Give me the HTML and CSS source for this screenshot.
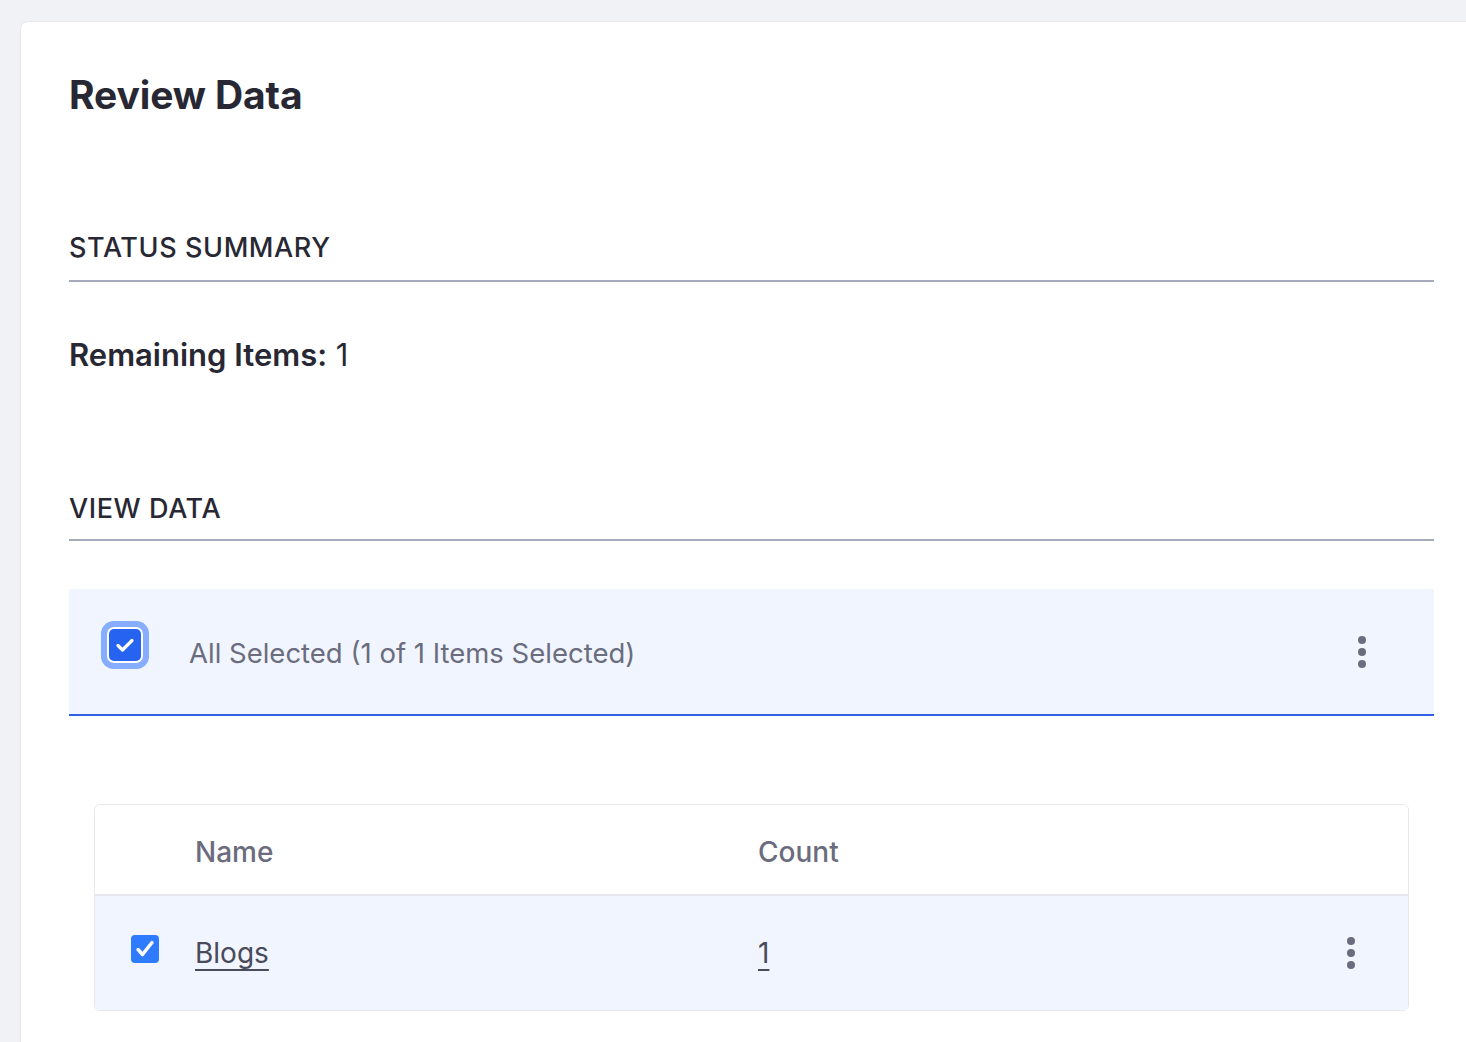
FILE: index.html
```html
<!DOCTYPE html>
<html>
<head>
<meta charset="utf-8">
<link rel="stylesheet" href="styles.css">
</head>
<body>
<div class="sheet">
  <div class="content">
    <h1 class="title">Review Data</h1>

    <h2 class="section-title">STATUS SUMMARY</h2>
    <p class="remaining"><strong>Remaining Items:</strong> 1</p>

    <h2 class="section-title view">VIEW DATA</h2>

    <div class="mbar">
      <span class="mbar-check">
        <svg viewBox="0 0 32 32" width="32" height="32"><path d="M9 16.5l4.5 4.5L23 11.5" fill="none" stroke="#fff" stroke-width="3.2" stroke-linecap="round" stroke-linejoin="round"/></svg>
      </span>
      <span class="mbar-text">All Selected (1 of 1 Items Selected)</span>
      <span class="kebab"><i></i><i></i><i></i></span>
    </div>

    <div class="table-card">
      <div class="trow thead">
        <div class="c-check"></div>
        <div class="c-name">Name</div>
        <div class="c-count">Count</div>
        <div class="c-act"></div>
      </div>
      <div class="trow tbody">
        <div class="c-check">
          <span class="row-check">
            <svg viewBox="0 0 28 28" width="28" height="28"><path d="M7 14.5l4.5 5L21 7.5" fill="none" stroke="#fff" stroke-width="3.4" stroke-linecap="round" stroke-linejoin="round"/></svg>
          </span>
        </div>
        <div class="c-name"><a class="link">Blogs</a></div>
        <div class="c-count"><a class="link">1</a></div>
        <div class="c-act"><span class="kebab"><i></i><i></i><i></i></span></div>
      </div>
    </div>
  </div>
</div>
</body>
</html>
```

FILE: styles.css
```css
html, body {
  margin: 0;
  padding: 0;
}
body {
  background: #f1f2f5;
  font-family: Inter, "Noto Sans", "Liberation Sans", sans-serif;
  color: #272833;
  overflow: hidden;
}
.sheet {
  margin: 21px 0 0 20px;
  width: 1500px;
  height: 1100px;
  background: #fff;
  border: 1px solid #e7e7ed;
  border-radius: 8px 0 0 0;
  box-sizing: border-box;
  padding: 0 0 0 48px;
}
.content {
  width: 1365px;
}
.title {
  margin: 0;
  padding-top: 49px;
  font-size: 39px;
  font-weight: 700;
  line-height: 48px;
  color: #272833;
  letter-spacing: -0.1px;
}
.section-title {
  margin: 108px 0 0;
  font-size: 27px;
  font-weight: 500;
  line-height: 36px;
  padding-top: 3px;
  padding-bottom: 14px;
  border-bottom: 2px solid #a7a9bc;
  color: #272833;
  letter-spacing: 0.6px;
}
.section-title.view {
  margin-top: 115px;
  padding-bottom: 12px;
}
.remaining {
  margin: 55px 0 0;
  font-size: 31px;
  line-height: 36px;
  color: #272833;
}
.remaining strong {
  font-weight: 600;
}
.mbar {
  margin-top: 48px;
  height: 125px;
  background: #f0f5ff;
  border-bottom: 2px solid #2e5fe6;
  display: flex;
  align-items: center;
  padding: 0 62px 0 40px;
}
.mbar-check {
  width: 32px;
  height: 32px;
  border-radius: 5px;
  background: #2563f0;
  box-shadow: 0 0 0 2px #fff, 0 0 0 8px #86adff;
  display: flex;
  margin-top: -13px;
  flex: none;
}
.mbar-text {
  margin-left: 48px;
  font-size: 27.5px;
  color: #6b6c7e;
  flex: 1;
  letter-spacing: 0;
  padding-top: 2px;
}
.kebab {
  display: flex;
  flex-direction: column;
  gap: 4px;
  align-items: center;
  width: 20px;
}
.kebab i {
  display: block;
  width: 8px;
  height: 8px;
  border-radius: 50%;
  background: #6b6c7e;
}
.table-card {
  margin: 88px 25px 0;
  border: 1px solid #e7e7ed;
  border-radius: 6px;
  overflow: hidden;
}
.trow {
  display: flex;
  align-items: center;
}
.thead {
  height: 91px;
  background: #fff;
  border-bottom: 2px solid #e7e7ed;
  font-size: 28px;
  font-weight: 500;
  color: #6b6c7e;
  padding-top: 4px;
  box-sizing: border-box;
}
.tbody {
  height: 114px;
  background: #f0f5ff;
  font-size: 28px;
}
.c-check {
  width: 100px;
  flex: none;
  display: flex;
  justify-content: flex-end;
  padding-right: 36px;
  box-sizing: border-box;
}
.c-name {
  width: 563px;
  flex: none;
}
.c-count {
  flex: 1;
}
.c-act {
  width: 114px;
  display: flex;
  justify-content: center;
}
.row-check {
  width: 28px;
  height: 28px;
  border-radius: 4px;
  background: #2e7bff;
  display: flex;
  margin-top: -8px;
}
.link {
  color: #494a5a;
  text-decoration: underline;
  text-decoration-thickness: 2px;
  text-underline-offset: 6px;
  text-decoration-skip-ink: none;
}
```
